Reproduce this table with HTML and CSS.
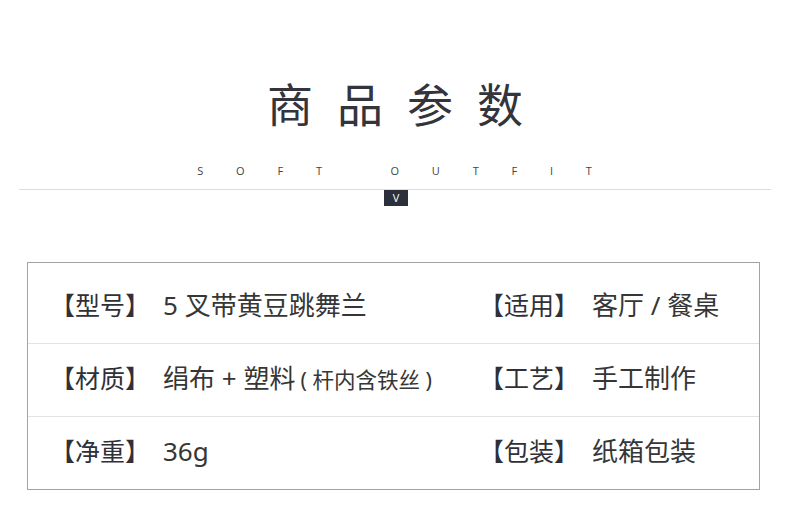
FILE: index.html
```html
<!DOCTYPE html>
<html lang="zh">
<head>
<meta charset="utf-8">
<link rel="stylesheet" href="styles.css">
</head>
<body>
<div class="page">
  <header class="head">
    <h1 class="title">商品参数</h1>
    <div class="sub">SOFT OUTFIT</div>
    <div class="rule"><span class="badge">V</span></div>
  </header>
  <section class="table">
    <div class="row">
      <div class="cell"><span class="lab">【型号】</span><span class="val">5 叉带黄豆跳舞兰</span></div>
      <div class="cell"><span class="lab">【适用】</span><span class="val">客厅 / 餐桌</span></div>
    </div>
    <div class="row">
      <div class="cell"><span class="lab">【材质】</span><span class="val">绢布 + 塑料<span class="small">( 杆内含铁丝 )</span></span></div>
      <div class="cell"><span class="lab">【工艺】</span><span class="val">手工制作</span></div>
    </div>
    <div class="row">
      <div class="cell"><span class="lab">【净重】</span><span class="val">36g</span></div>
      <div class="cell"><span class="lab">【包装】</span><span class="val">纸箱包装</span></div>
    </div>
  </section>
</div>
</body>
</html>
```
FILE: styles.css
```css
html, body {
  margin: 0;
  padding: 0;
  background: #fff;
}
body {
  font-family: "Noto Sans CJK SC", "Noto Sans", sans-serif;
  color: #33343c;
}
.page {
  width: 790px;
  height: 532px;
  overflow: hidden;
}
.head {
  display: flex;
  flex-direction: column;
  align-items: center;
  padding-top: 79px;
}
.title {
  margin: 0;
  font-weight: 400;
  font-size: 46px;
  line-height: 46px;
  letter-spacing: 24px;
  padding-left: 24px;
  color: #33343c;
}
.sub {
  margin-top: 39px;
  font-family: "Open Sans", sans-serif;
  font-size: 11px;
  line-height: 14px;
  letter-spacing: 32.8px;
  padding-left: 32px;
  color: #444;
}
.rule {
  margin-top: 11px;
  width: 752px;
  border-top: 1px solid #dcdcdc;
  display: flex;
  justify-content: center;
}
.badge {
  width: 24px;
  height: 16px;
  margin-left: 2px;
  background: #2b303b;
  color: #fff;
  font-family: "Open Sans", sans-serif;
  font-size: 11px;
  line-height: 16px;
  text-align: center;
}
.table {
  margin: 56px 0 0 27px;
  width: 731px;
  border: 1px solid #a3a3a3;
  padding-top: 8px;
}
.row {
  display: grid;
  grid-template-columns: 429px 1fr;
  height: 66px;
  padding-bottom: 6px;
  align-items: center;
  padding-left: 22px;
}
.row + .row {
  border-top: 1px solid #e2e2e2;
}
.cell {
  display: flex;
  align-items: baseline;
  white-space: nowrap;
}
.lab {
  width: 113px;
  flex: none;
  font-size: 25px;
  color: #2f3038;
}
.val {
  font-family: "Noto Sans", "Noto Sans CJK SC", sans-serif;
  font-size: 26px;
  color: #363636;
}
.small {
  font-size: 21.5px;
  margin-left: 5px;
}
```
